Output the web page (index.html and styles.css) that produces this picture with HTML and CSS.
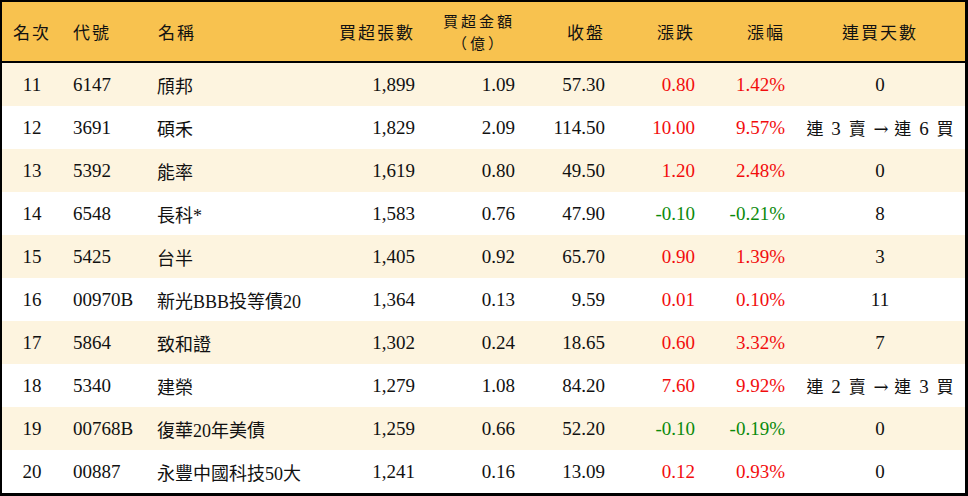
FILE: index.html
```html
<!DOCTYPE html>
<html lang="zh-Hant">
<head>
<meta charset="utf-8">
<title>買超排行</title>
<link rel="stylesheet" href="styles.css">
</head>
<body>
<div class="frame">
<table class="rank">
  <colgroup>
    <col class="c-rank"><col class="c-code"><col class="c-name"><col class="c-vol"><col class="c-amt"><col class="c-close"><col class="c-chg"><col class="c-pct"><col class="c-days">
  </colgroup>
  <thead>
    <tr>
      <th class="ctr">名次</th>
      <th class="lft">代號</th>
      <th class="lft">名稱</th>
      <th class="rgt">買超張數</th>
      <th class="rgt"><span class="two"><span class="ln">買超金額</span><span class="ln">（億）</span></span></th>
      <th class="rgt">收盤</th>
      <th class="rgt">漲跌</th>
      <th class="rgt">漲幅</th>
      <th class="ctr">連買天數</th>
    </tr>
  </thead>
  <tbody>
    <tr><td class="ctr">11</td><td class="lft">6147</td><td class="lft nm">頎邦</td><td class="rgt">1,899</td><td class="rgt">1.09</td><td class="rgt">57.30</td><td class="rgt up">0.80</td><td class="rgt up">1.42%</td><td class="ctr">0</td></tr>
    <tr><td class="ctr">12</td><td class="lft">3691</td><td class="lft nm">碩禾</td><td class="rgt">1,829</td><td class="rgt">2.09</td><td class="rgt">114.50</td><td class="rgt up">10.00</td><td class="rgt up">9.57%</td><td class="ctr streak">連 <span class="dg">3</span> 賣 <span class="arw">→</span> 連 <span class="dg">6</span> 買</td></tr>
    <tr><td class="ctr">13</td><td class="lft">5392</td><td class="lft nm">能率</td><td class="rgt">1,619</td><td class="rgt">0.80</td><td class="rgt">49.50</td><td class="rgt up">1.20</td><td class="rgt up">2.48%</td><td class="ctr">0</td></tr>
    <tr><td class="ctr">14</td><td class="lft">6548</td><td class="lft nm">長科*</td><td class="rgt">1,583</td><td class="rgt">0.76</td><td class="rgt">47.90</td><td class="rgt dn">-0.10</td><td class="rgt dn">-0.21%</td><td class="ctr">8</td></tr>
    <tr><td class="ctr">15</td><td class="lft">5425</td><td class="lft nm">台半</td><td class="rgt">1,405</td><td class="rgt">0.92</td><td class="rgt">65.70</td><td class="rgt up">0.90</td><td class="rgt up">1.39%</td><td class="ctr">3</td></tr>
    <tr><td class="ctr">16</td><td class="lft">00970B</td><td class="lft nm">新光BBB投等債20</td><td class="rgt">1,364</td><td class="rgt">0.13</td><td class="rgt">9.59</td><td class="rgt up">0.01</td><td class="rgt up">0.10%</td><td class="ctr">11</td></tr>
    <tr><td class="ctr">17</td><td class="lft">5864</td><td class="lft nm">致和證</td><td class="rgt">1,302</td><td class="rgt">0.24</td><td class="rgt">18.65</td><td class="rgt up">0.60</td><td class="rgt up">3.32%</td><td class="ctr">7</td></tr>
    <tr><td class="ctr">18</td><td class="lft">5340</td><td class="lft nm">建榮</td><td class="rgt">1,279</td><td class="rgt">1.08</td><td class="rgt">84.20</td><td class="rgt up">7.60</td><td class="rgt up">9.92%</td><td class="ctr streak">連 <span class="dg">2</span> 賣 <span class="arw">→</span> 連 <span class="dg">3</span> 買</td></tr>
    <tr><td class="ctr">19</td><td class="lft">00768B</td><td class="lft nm">復華20年美債</td><td class="rgt">1,259</td><td class="rgt">0.66</td><td class="rgt">52.20</td><td class="rgt dn">-0.10</td><td class="rgt dn">-0.19%</td><td class="ctr">0</td></tr>
    <tr><td class="ctr">20</td><td class="lft">00887</td><td class="lft nm">永豐中國科技50大</td><td class="rgt">1,241</td><td class="rgt">0.16</td><td class="rgt">13.09</td><td class="rgt up">0.12</td><td class="rgt up">0.93%</td><td class="ctr">0</td></tr>
  </tbody>
</table>
</div>
</body>
</html>
```

FILE: styles.css
```css
html, body {
  margin: 0;
  padding: 0;
  background: #ffffff;
}

.frame {
  width: 968px;
  height: 496px;
  box-sizing: border-box;
  border-style: solid;
  border-color: #000;
  border-width: 2px 3px 3px 2px;
  overflow: hidden;
}

.rank {
  width: 963px;
  border-collapse: separate;
  border-spacing: 0;
  table-layout: fixed;
  font-family: "Liberation Serif", "Noto Sans CJK TC", serif;
  font-size: 19px;
  color: #111;
}

.c-rank { width: 60px; }
.c-code { width: 85px; }
.c-name { width: 183px; }
.c-vol { width: 95px; }
.c-amt { width: 100px; }
.c-close { width: 90px; }
.c-chg { width: 90px; }
.c-pct { width: 90px; }
.c-days { width: 170px; }

.rank thead tr { height: 61px; }

.rank th {
  background: #f8c24f;
  border-bottom: 2px solid #000;
  font-family: "Noto Sans CJK TC", serif;
  font-weight: 400;
  font-size: 17px;
  letter-spacing: 2px;
  line-height: 20px;
  padding: 0;
  vertical-align: middle;
}

.rank th.rgt { padding-right: 8px; }
.rank th.lft { padding-left: 11px; }
.rank th:nth-child(3) { padding-left: 10px; }
.rank th:nth-child(5) { padding-right: 8px; }

.two {
  display: inline-flex;
  flex-direction: column;
  align-items: center;
  padding-top: 1px;
}

.two .ln {
  display: block;
  line-height: 22px;
  font-size: 15px;
  letter-spacing: 3px;
  white-space: nowrap;
}

.rank tbody tr { height: 43px; }
.rank tbody tr:nth-child(odd) td { background: #fdf4df; }

.rank td {
  padding: 0;
  vertical-align: middle;
  white-space: nowrap;
}

.ctr { text-align: center; }
.lft { text-align: left; padding-left: 11px !important; }
.rgt { text-align: right; padding-right: 10px !important; }
.rank td:nth-child(3) { padding-left: 10px !important; }

.nm {
  font-family: "Liberation Serif", "Noto Sans CJK TC", serif;
  font-size: 18px;
}

.up { color: #f20d0d; }
.dn { color: #0b8a0b; }

.streak {
  font-family: "Noto Sans CJK TC", serif;
  font-size: 17px;
  letter-spacing: 2px;
  padding-left: 2px !important;
}

.streak .dg {
  font-family: "Liberation Serif", serif;
  font-size: 19px;
}

.streak .arw {
  font-family: "DejaVu Serif", serif;
  font-size: 18px;
  letter-spacing: 0;
}
```
